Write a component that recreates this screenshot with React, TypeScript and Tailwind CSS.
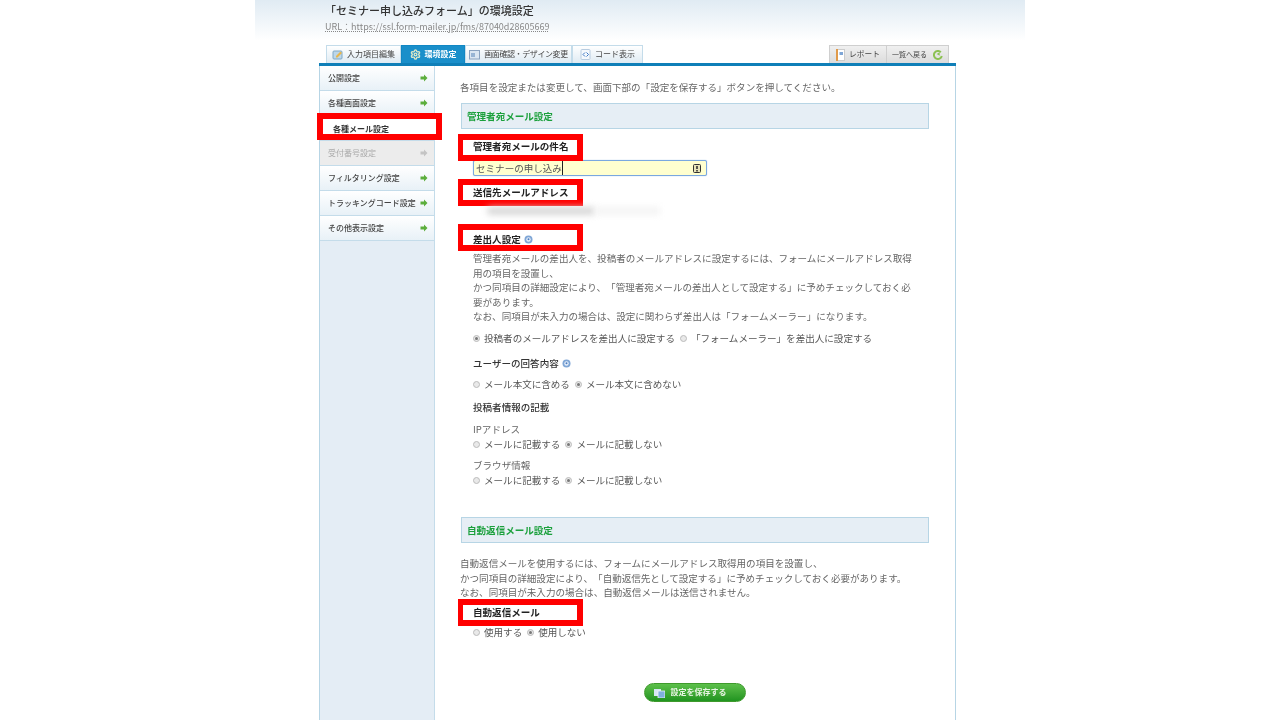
import { Settings } from 'lucide-react'
import type { ReactNode } from 'react'

const menu = [
  { label: '公開設定' },
  { label: '各種画面設定' },
  { label: '各種メール設定', marked: true },
  { label: '受付番号設定', disabled: true },
  { label: 'フィルタリング設定' },
  { label: 'トラッキングコード設定' },
  { label: 'その他表示設定' },
]

const Arrow = ({ gray }: { gray?: boolean }) => (
  <svg width="8" height="8" viewBox="0 0 8 8">
    <path d="M0.5 2.5H4V0.5L7.5 4L4 7.5V5.5H0.5Z" fill={gray ? '#c4c4c4' : '#5cae3c'} />
  </svg>
)

const Help = () => (
  <svg width="9" height="9" viewBox="0 0 9 9" className="ml-[3px]">
    <circle cx="4.5" cy="4.5" r="4" fill="#7fa6d6" />
    <circle cx="4.5" cy="4.5" r="2.2" fill="#e8f0fa" />
    <circle cx="4.5" cy="4.2" r="1" fill="#4a7cc0" />
  </svg>
)

const Radio = ({ label, checked }: { label: string; checked?: boolean }) => (
  <span className="flex items-center">
    <span className="flex h-[7px] w-[7px] items-center justify-center rounded-full border border-[#bbb] bg-[#e9e9e9]">
      {checked && <span className="h-[3px] w-[3px] rounded-full bg-[#777]" />}
    </span>
    <span className="ml-[4px] mr-[5px]">{label}</span>
  </span>
)

const Radios = ({ className, children }: { className: string; children: ReactNode }) => (
  <div className={`flex h-[14px] items-center text-[#555] ${className}`}>{children}</div>
)

const SectionTitle = ({ className, children }: { className: string; children: ReactNode }) => (
  <div
    className={`ml-[1px] flex h-[26px] w-[468px] items-center border border-[#b7d5e5] bg-[#e6eef5] pl-[5px] font-bold text-[#1ba03c] ${className}`}
  >
    {children}
  </div>
)

// label with the red annotation frame behind it
const MarkedLabel = ({ className, boxTop, children }: { className: string; boxTop: string; children: ReactNode }) => (
  <div className={`relative h-[14px] leading-[14px] ${className}`}>
    <div className={`absolute left-[-15px] h-[27px] w-[125px] border-[6px] border-l-[5px] border-[#ff0000] bg-white ${boxTop}`} />
    <div className="relative top-[-1px] font-bold text-[#222]">{children}</div>
  </div>
)

const Tab = ({ width, active, icon, children }: { width: string; active?: boolean; icon: ReactNode; children: ReactNode }) => (
  <div
    className={`flex h-[18px] items-center justify-center gap-[4px] whitespace-nowrap border border-b-0 text-[8px] ${width} ${
      active
        ? 'border-[#1187c4] bg-[#1a8fca] font-bold text-white'
        : 'border-[#c4dcea] bg-linear-to-b from-white to-[#dfebf3] text-[#444]'
    }`}
  >
    {icon}
    {children}
  </div>
)

export default function App() {
  return (
    <div className="h-[720px] overflow-hidden bg-white font-['Noto_Sans_CJK_JP','Liberation_Sans',sans-serif] text-[9.55px] leading-[14.5px] text-[#666] blur-[0.3px] [text-spacing-trim:space-all]">
      <div className="mx-auto w-[770px]">
        <header className="h-[45px] bg-linear-to-b from-[#e0ebf3] to-white to-90% pl-[70px]">
          <h1 className="pt-[2px] text-[11px] font-medium leading-[17px] text-[#333]">「セミナー申し込みフォーム」の環境設定</h1>
          <p className="mt-[1px] text-[9px] leading-[14px] text-[#888] underline decoration-dotted">
            URL：https://ssl.form-mailer.jp/fms/87040d28605669
          </p>
        </header>

        <div className="mx-[64px] w-[637px]">
          <nav className="flex h-[18px] items-start justify-between px-[7px]">
            <div className="flex">
              <Tab
                width="w-[75px]"
                icon={
                  <svg width="11" height="11" viewBox="0 0 11 11">
                    <rect x="1" y="2" width="9" height="8" rx="1" fill="#bcd7ea" stroke="#7fa8c6" />
                    <path d="M4 7L8.5 2.5L10 4L5.5 8.5H4Z" fill="#e8b64c" />
                  </svg>
                }
              >
                入力項目編集
              </Tab>
              <Tab width="w-[64px]" active icon={<Settings size={11} strokeWidth={3} className="text-[#dce8c8]" />}>
                環境設定
              </Tab>
              <Tab
                width="w-[107px] tracking-[-0.4px]"
                icon={
                  <svg width="11" height="11" viewBox="0 0 11 11">
                    <rect x="0.5" y="1.5" width="10" height="8.5" fill="#dbe6f2" stroke="#8aa2c0" />
                    <rect x="2" y="4" width="4" height="4" fill="#98b4d4" />
                  </svg>
                }
              >
                画面確認・デザイン変更
              </Tab>
              <Tab
                width="w-[71px]"
                icon={
                  <svg width="11" height="11" viewBox="0 0 11 11">
                    <rect x="1" y="0.5" width="9" height="10" rx="1" fill="#f4f8fc" stroke="#b8cce0" />
                    <path d="M5 3.5L3 5.5L5 7.5M6.5 3.5L8.5 5.5L6.5 7.5" fill="none" stroke="#3a76c4" />
                  </svg>
                }
              >
                コード表示
              </Tab>
            </div>
            <div className="flex h-[18px] w-[120px] whitespace-nowrap border border-b-0 border-[#cfcfcf] bg-linear-to-b from-[#f0f0f0] to-[#dcdcdc] text-[7.7px] text-[#444]">
              <div className="flex w-[57px] items-center justify-center gap-[4px] border-r border-[#cfcfcf]">
                <svg width="9" height="12" viewBox="0 0 9 12">
                  <rect x="0.5" y="0.5" width="8" height="11" fill="#fff" stroke="#ccc" />
                  <rect x="0" y="0" width="2" height="12" fill="#e09a4a" />
                  <rect x="3.5" y="3" width="3.5" height="3" fill="#7fa6d6" />
                </svg>
                レポート
              </div>
              <div className="flex flex-1 items-center justify-center gap-[6px] text-[7px]">
                一覧へ戻る
                <svg width="10" height="10" viewBox="0 0 10 10">
                  <path d="M7.8 2.2A4 4 0 1 0 8.8 6" fill="none" stroke="#8cc152" strokeWidth="2" />
                  <path d="M3.5 2.5H7L5.2 5.6Z" fill="#8cc152" transform="rotate(90 5.2 4)" />
                </svg>
              </div>
            </div>
          </nav>

          <div className="h-[3px] bg-[#0f7fb8]" />

          <main className="flex h-[660px] border-x border-[#b7d5e5]">
            <aside className="w-[115px] border-r border-[#c4dcea] bg-[#e4edf5]">
              {menu.map(item => (
                <div
                  key={item.label}
                  className={`relative flex h-[25px] items-center justify-between whitespace-nowrap border-b border-[#c4dcea] pl-[8px] pr-[6px] text-[8px] ${
                    item.disabled
                      ? 'bg-[#ececec] text-[#aaa]'
                      : 'bg-linear-to-b from-white to-[#e8f1f7] font-medium text-[#444]'
                  }`}
                >
                  {item.marked ? (
                    <div className="absolute left-[-3px] top-[-3px] h-[27px] w-[125px] border-[6px] border-[#ff0000] bg-white pl-[10px] pt-[2px] font-bold leading-[15px] text-[#333]">
                      {item.label}
                    </div>
                  ) : (
                    <>
                      {item.label}
                      <Arrow gray={item.disabled} />
                    </>
                  )}
                </div>
              ))}
            </aside>

            <section className="flex-1 pl-[25px]">
              <p className="mt-[14px]">各項目を設定または変更して、画面下部の「設定を保存する」ボタンを押してください。</p>
              <SectionTitle className="mt-[8.5px]">管理者宛メール設定</SectionTitle>

              <div className="pl-[13px]">
                <MarkedLabel className="mt-[11px]" boxTop="top-[-6px]">
                  管理者宛メールの件名
                </MarkedLabel>
                <div className="mt-[6px] flex h-[16px] w-[234px] items-center justify-between rounded-[2px] border border-[#7aa8e0] bg-[#ffffcf] pl-[2px] pr-[5px] text-[#555] shadow-[0_0_1px_#7aa8e0]">
                  <span className="border-r border-[#222]">セミナーの申し込み</span>
                  <svg width="8" height="9" viewBox="0 0 8 9">
                    <rect x="0.5" y="0.5" width="7" height="8" rx="1" fill="#e8e4b8" stroke="#333" />
                    <rect x="3.2" y="2" width="1.6" height="3" fill="#333" />
                    <rect x="3.2" y="6" width="1.6" height="1.5" fill="#333" />
                  </svg>
                </div>
                <MarkedLabel className="mt-[10px]" boxTop="top-[-7px]">
                  送信先メールアドレス
                </MarkedLabel>
                <div className="ml-[14px] mt-[4px] flex h-[14px] w-[175px] items-center">
                  <div className="h-[8px] w-[108px] rounded-full bg-[#d8d8d8] blur-[3px]" />
                  <div className="h-[8px] w-[65px] bg-[#f4f4f4] blur-[3px]" />
                </div>
                <MarkedLabel className="mt-[15px]" boxTop="top-[-9px]">
                  <span className="flex items-center">
                    差出人設定
                    <Help />
                  </span>
                </MarkedLabel>
                <p className="mt-[4px] w-[442px]">
                  管理者宛メールの差出人を、投稿者のメールアドレスに設定するには、フォームにメールアドレス取得
                  <br />
                  用の項目を設置し、
                  <br />
                  かつ同項目の詳細設定により、「管理者宛メールの差出人として設定する」に予めチェックしておく必
                  <br />
                  要があります。
                  <br />
                  なお、同項目が未入力の場合は、設定に関わらず差出人は「フォームメーラー」になります。
                </p>
                <Radios className="mt-[7.5px]">
                  <Radio checked label="投稿者のメールアドレスを差出人に設定する" />
                  <Radio label="「フォームメーラー」を差出人に設定する" />
                </Radios>
                <div className="mt-[11px] flex h-[14px] items-center font-medium text-[#333]">
                  ユーザーの回答内容
                  <Help />
                </div>
                <Radios className="mt-[7px]">
                  <Radio label="メール本文に含める" />
                  <Radio checked label="メール本文に含めない" />
                </Radios>
                <div className="mt-[9px] h-[14px] font-medium text-[#333]">投稿者情報の記載</div>
                <div className="mt-[8px] h-[14px]">IPアドレス</div>
                <Radios className="mt-[1px]">
                  <Radio label="メールに記載する" />
                  <Radio checked label="メールに記載しない" />
                </Radios>
                <div className="mt-[7px] h-[14px]">ブラウザ情報</div>
                <Radios className="mt-[1px]">
                  <Radio label="メールに記載する" />
                  <Radio checked label="メールに記載しない" />
                </Radios>
              </div>

              <SectionTitle className="mt-[30px]">自動返信メール設定</SectionTitle>
              <p className="mt-[13px]">
                自動返信メールを使用するには、フォームにメールアドレス取得用の項目を設置し、
                <br />
                かつ同項目の詳細設定により、「自動返信先として設定する」に予めチェックしておく必要があります。
                <br />
                なお、同項目が未入力の場合は、自動返信メールは送信されません。
              </p>

              <div className="pl-[13px]">
                <MarkedLabel className="mt-[6.5px]" boxTop="top-[-7px]">
                  自動返信メール
                </MarkedLabel>
                <Radios className="mt-[5px]">
                  <Radio label="使用する" />
                  <Radio checked label="使用しない" />
                </Radios>
              </div>

              <div className="ml-[184px] mt-[44px] flex h-[19px] w-[102px] items-center justify-center gap-[6px] rounded-full border border-[#3f9a2c] bg-linear-to-b from-[#5cc04a] to-[#1f9420] pr-[10px] text-[8px] font-bold text-[#e8f5e4]">
                <svg width="11" height="10" viewBox="0 0 11 10">
                  <rect x="0" y="1" width="7" height="7" fill="#d7e6f4" />
                  <rect x="4" y="3" width="7" height="7" fill="#7fb0de" stroke="#eef5fb" strokeWidth="0.8" />
                </svg>
                設定を保存する
              </div>
            </section>
          </main>
        </div>
      </div>
    </div>
  )
}
